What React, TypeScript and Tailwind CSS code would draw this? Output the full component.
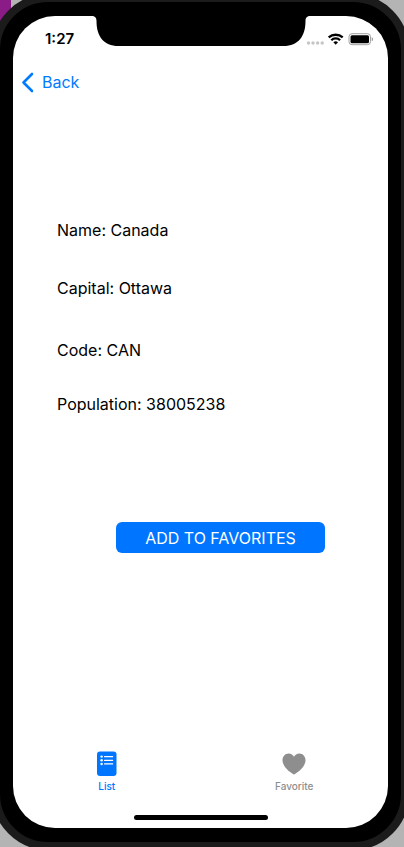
import React from "react";

function Notch() {
  return (
    <svg
      className="absolute left-1/2 top-0 -translate-x-1/2"
      width="219"
      height="30"
      viewBox="0 0 219 30"
      aria-hidden="true"
    >
      <path
        d="M0 0C3.500 0 5 1.500 5 5C5 20 12 30 27 30H192C207 30 214 20 214 5C214 1.500 215.500 0 219 0Z"
        fill="#000"
      />
    </svg>
  );
}

function StatusBar() {
  return (
    <div className="relative flex h-11 items-center justify-between pt-0.5 pl-8 pr-3.5">
      <Notch />
      <time className="text-[15px] leading-5 font-semibold">1:27</time>
      <svg width="68" height="14" viewBox="0 0 68 14" aria-hidden="true">
        <g fill="#c5c5c7">
          <circle cx="2.500" cy="11" r="1.700" />
          <circle cx="7" cy="11" r="1.700" />
          <circle cx="11.600" cy="11" r="1.700" />
          <circle cx="16.200" cy="11" r="1.700" />
        </g>
        <g fill="none" stroke="#000" strokeWidth="2.300">
          <path d="M22.700 5.400A10.500 10.500 0 0 1 36.700 5.400" />
          <path d="M25.300 8.300A6.200 6.200 0 0 1 34.100 8.300" />
        </g>
        <path d="M29.700 12.700L27.400 10.300A3.300 3.300 0 0 1 32 10.300Z" fill="#000" />
        <rect x="43" y="1.700" width="21.500" height="11" rx="3" fill="none" stroke="#a0a0a0" />
        <rect x="44.500" y="3.200" width="18.500" height="8" rx="1.500" fill="#000" />
        <path d="M65.700 5.200C67.600 5.700 67.600 8.700 65.700 9.200Z" fill="#a0a0a0" />
      </svg>
    </div>
  );
}

function ListIcon() {
  return (
    <svg width="20" height="26" viewBox="0 0 20 26" aria-hidden="true">
      <rect x="0" y="0.500" width="19.500" height="24.500" rx="3" fill="currentColor" />
      <g fill="#fff">
        <circle cx="4.600" cy="5.600" r="1.200" />
        <circle cx="4.600" cy="9.300" r="1.200" />
        <circle cx="4.600" cy="13" r="1.200" />
        <rect x="7" y="5" width="9.200" height="1.300" rx="0.500" />
        <rect x="7" y="8.700" width="9.200" height="1.300" rx="0.500" />
        <rect x="7" y="12.300" width="9.200" height="1.300" rx="0.500" />
      </g>
    </svg>
  );
}

function HeartIcon() {
  return (
    <svg width="24" height="26" viewBox="0 0 24 26" aria-hidden="true">
      <path
        d="M12 23.400C11.500 23.400 0.500 17.300 0.500 9.200C0.500 5.200 3.200 2.400 6.700 2.400C9.100 2.400 11 3.700 12 5.700C13 3.700 14.900 2.400 17.300 2.400C20.800 2.400 23.500 5.200 23.500 9.200C23.500 17.300 12.500 23.400 12 23.400Z"
        fill="currentColor"
      />
    </svg>
  );
}

export default function App() {
  return (
    <div className="relative h-screen min-h-[847px] overflow-hidden bg-[#b4b4b4] font-['Inter','Liberation_Sans',sans-serif] text-black">
      <div className="absolute left-0 top-0 h-12 w-[11px] bg-[#8b1b86]" />
      <div className="relative -mt-1.5 -ml-2 -mr-[5px] rounded-[56px] border-8 border-[#1b1b1b] bg-black px-[13px] py-[14px]">
        <main className="flex min-h-[812px] flex-col rounded-[42px] bg-white">
          <StatusBar />
          <nav className="flex h-11 items-center pl-2">
            <button className="flex items-center gap-2 text-base leading-6 text-[#007aff]">
              <svg width="13" height="21" viewBox="0 0 13 21" aria-hidden="true">
                <path
                  d="M11 2L2.500 10.500L11 19"
                  fill="none"
                  stroke="currentColor"
                  strokeWidth="2.600"
                  strokeLinecap="round"
                  strokeLinejoin="round"
                />
              </svg>
              Back
            </button>
          </nav>
          <section className="flex flex-col pl-11 pt-[114px] text-base leading-6">
            <p>Name: Canada</p>
            <p className="mt-[34px]">Capital: Ottawa</p>
            <p className="mt-[38px]">Code: CAN</p>
            <p className="mt-[30px]">Population: 38005238</p>
          </section>
          <div className="flex pl-[103px] pr-[63px] pt-[106px]">
            <button className="h-[31px] flex-1 rounded-md bg-[#0075ff] text-base leading-6 text-white">
              ADD TO FAVORITES
            </button>
          </div>
          <nav className="mt-auto grid grid-cols-2 pb-[23px] text-[10px] leading-3 font-medium">
            <button className="flex flex-col items-center gap-[3px] text-[#0075ff]">
              <ListIcon />
              List
            </button>
            <button className="flex flex-col items-center gap-[3px] text-[#8e8e8e]">
              <HeartIcon />
              Favorite
            </button>
          </nav>
          <div className="mx-auto mb-2 h-[5px] w-[134px] rounded-full bg-black" />
        </main>
      </div>
    </div>
  );
}
